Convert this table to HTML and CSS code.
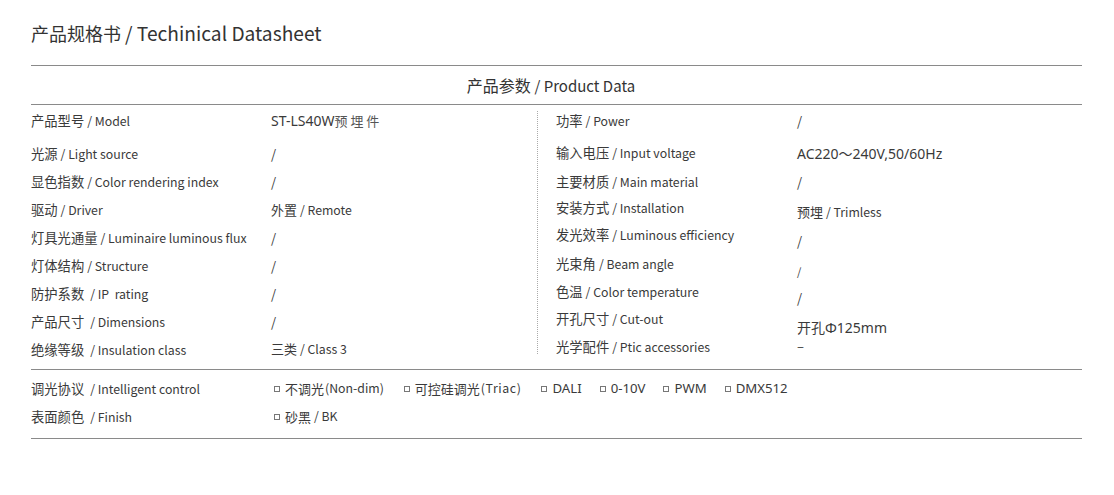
FILE: index.html
```html
<!DOCTYPE html>
<html lang="zh-CN">
<head>
<meta charset="utf-8">
<title>产品规格书 / Techinical Datasheet</title>
<link rel="stylesheet" href="styles.css">
</head>
<body>
<div class="sheet">
  <h1 class="title">产品规格书 <span class="en">/ Techinical Datasheet</span></h1>
  <div class="rule"></div>
  <h2 class="section">产品参数 <span class="en">/ Product Data</span></h2>
  <div class="rule"></div>
  <div class="cols">
    <div class="col col-left">
      <div class="row first"><div class="lab">产品型号 <span class="en">/ Model</span></div><div class="val wide">ST-LS40W<span class="cjk">预 埋 件</span></div></div>
      <div class="row"><div class="lab">光源 <span class="en">/ Light source</span></div><div class="val">/</div></div>
      <div class="row"><div class="lab">显色指数 <span class="en">/ Color rendering index</span></div><div class="val">/</div></div>
      <div class="row"><div class="lab">驱动 <span class="en">/ Driver</span></div><div class="val">外置 <span class="en">/ Remote</span></div></div>
      <div class="row"><div class="lab">灯具光通量 <span class="en">/ Luminaire luminous flux</span></div><div class="val">/</div></div>
      <div class="row"><div class="lab">灯体结构 <span class="en">/ Structure</span></div><div class="val">/</div></div>
      <div class="row"><div class="lab">防护系数 &nbsp;<span class="en">/ IP&nbsp; rating</span></div><div class="val">/</div></div>
      <div class="row"><div class="lab">产品尺寸 &nbsp;<span class="en">/ Dimensions</span></div><div class="val">/</div></div>
      <div class="row"><div class="lab">绝缘等级 &nbsp;<span class="en">/ Insulation class</span></div><div class="val up">三类 <span class="en">/ Class 3</span></div></div>
    </div>
    <div class="col col-right">
      <div class="row first"><div class="lab">功率 <span class="en">/ Power</span></div><div class="val">/</div></div>
      <div class="row"><div class="lab up1">输入电压 <span class="en">/ Input voltage</span></div><div class="val wide">AC220～240V,50/60Hz</div></div>
      <div class="row"><div class="lab">主要材质 <span class="en">/ Main material</span></div><div class="val">/</div></div>
      <div class="row"><div class="lab up2">安装方式 <span class="en">/ Installation</span></div><div class="val dn3">预埋 <span class="en">/ Trimless</span></div></div>
      <div class="row"><div class="lab up3">发光效率 <span class="en">/ Luminous efficiency</span></div><div class="val dn5">/</div></div>
      <div class="row"><div class="lab up2">光束角 <span class="en">/ Beam angle</span></div><div class="val dn7 small">/</div></div>
      <div class="row"><div class="lab up2">色温 <span class="en">/ Color temperature</span></div><div class="val dn6">/</div></div>
      <div class="row"><div class="lab up3">开孔尺寸 <span class="en">/ Cut-out</span></div><div class="val wide dn8">开孔Φ125mm</div></div>
      <div class="row"><div class="lab up3">光学配件 <span class="en">/ Ptic accessories</span></div><div class="val up8">–</div></div>
    </div>
  </div>
  <div class="rule"></div>
  <div class="opts">
    <div class="row"><div class="lab">调光协议 &nbsp;<span class="en">/ Intelligent control</span></div>
      <div class="val options">
        <span class="opt"><i class="box"></i>不调光<span class="en sm">(Non-dim)</span></span>
        <span class="opt triac"><i class="box"></i>可控硅调光<span class="en sm">(Triac)</span></span>
        <span class="opt wide"><i class="box"></i>DALI</span>
        <span class="opt wide"><i class="box"></i>0-10V</span>
        <span class="opt wide"><i class="box"></i>PWM</span>
        <span class="opt wide"><i class="box"></i>DMX512</span>
      </div>
    </div>
    <div class="row"><div class="lab">表面颜色 &nbsp;<span class="en">/ Finish</span></div>
      <div class="val options"><span class="opt"><i class="box"></i>砂黑&nbsp;<span class="en">/&nbsp;BK</span></span></div>
    </div>
  </div>
  <div class="rule"></div>
</div>
</body>
</html>
```
FILE: styles.css
```css
* { box-sizing: border-box; }
html, body { margin: 0; padding: 0; background: #fff; }
body {
  font-family: "Noto Sans CJK SC", "Noto Sans", sans-serif;
  color: #3a3a3a;
}
.sheet {
  width: 1051px;
  margin-left: 31px;
  padding-top: 19px;
}
.title {
  margin: 0;
  font-size: 18px;
  font-weight: 400;
  line-height: 28px;
  height: 46px;
  color: #333;
}
.title .en { font-size: 19.2px; }
.rule {
  height: 1px;
  background: #8a8a8a;
}
.section {
  margin: 0;
  font-size: 16px;
  font-weight: 400;
  text-align: center;
  height: 38px;
  line-height: 38px;
  padding-right: 11px;
  color: #333;
}
.section .en { font-size: 15px; }
.cols {
  display: flex;
  padding-bottom: 6px;
}
.col { display: flex; flex-direction: column; }
.col-left { width: 506px; }
.col-right {
  flex: 1;
  padding-left: 19px;
  position: relative;
}
.col-right::before {
  content: "";
  position: absolute;
  left: 0;
  top: 6px;
  bottom: 9px;
  border-left: 1px dotted #aaa;
}
.row {
  display: flex;
  align-items: center;
  height: 28px;
}
.row.first { height: 34px; padding-bottom: 4px; }
.lab {
  font-size: 13.3px;
  white-space: nowrap;
}
.col-left .lab, .opts .lab { width: 240px; }
.col-right .lab { width: 241px; }
.en { font-size: 12.3px; }
.val {
  font-size: 13px;
  white-space: nowrap;
}
.val.wide {
  font-family: "Noto Sans", "Noto Sans CJK SC", sans-serif;
  font-size: 14px;
}
.val.wide .cjk {
  font-family: "Noto Sans CJK SC", sans-serif;
  font-size: 13px;
  color: #555;
}
.val.small { font-size: 11px; }
.up { padding-bottom: 2px; }
.up1 { padding-bottom: 2px; }
.up2 { padding-bottom: 4px; }
.up3 { padding-bottom: 5px; }
.up8 { padding-bottom: 8px; }
.dn3 { padding-top: 4px; }
.dn5 { padding-top: 7px; }
.dn6 { padding-top: 9px; }
.dn7 { padding-top: 12px; }
.dn8 { padding-top: 11px; }
.opts { padding-top: 4px; padding-bottom: 8px; }
.options { display: flex; align-items: center; }
.opt {
  display: inline-flex;
  align-items: center;
  font-size: 13px;
  margin-right: 17px;
}
.opt.triac { margin-right: 17px; }
.opt.triac .sm { letter-spacing: 0.6px; }
.opt.wide {
  font-family: "Noto Sans", "Noto Sans CJK SC", sans-serif;
  font-size: 13.2px;
  margin-right: 15px;
}
.opt .sm { font-size: 12.3px; margin-left: 1px; }
.box {
  display: inline-block;
  width: 6px;
  height: 6px;
  border: 1px solid #777;
  margin: 1px 5px 0 3px;
}
```
